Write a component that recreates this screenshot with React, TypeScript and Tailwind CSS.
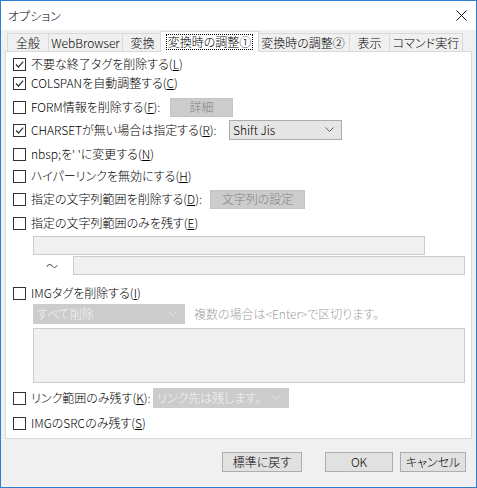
import React from 'react';

const font = "font-['Noto_Sans_CJK_JP','Noto_Sans',sans-serif] font-light [font-feature-settings:'palt']";

const CheckBox: React.FC<{ on?: boolean }> = ({ on }) => (
  <span className="w-[13px] h-[13px] border border-[#333333] bg-white flex items-center justify-center shrink-0">
    {on && (
      <svg width="11" height="11" viewBox="0 0 11 11">
        <path d="M2 5.5 L4.5 8 L9.2 2.6" fill="none" stroke="#333333" strokeWidth="1.2" />
      </svg>
    )}
  </span>
);

interface OptionProps {
  text: string;
  mnemonic: string;
  on?: boolean;
  colon?: boolean;
  width?: string;
}

const Option: React.FC<OptionProps> = ({ text, mnemonic, on, colon, width }) => (
  <div className={`flex items-center gap-[5px] shrink-0 ${width ?? ''}`}>
    <CheckBox on={on} />
    <span className="text-[12px] leading-[16px] text-black whitespace-nowrap">
      {text}(<u>{mnemonic}</u>){colon ? ':' : ''}
    </span>
  </div>
);

const Chevron: React.FC<{ color: string }> = ({ color }) => (
  <svg width="9" height="6" viewBox="0 0 9 6">
    <path d="M0.5 0.5 L4.5 4.5 L8.5 0.5" fill="none" stroke={color} strokeWidth="1" />
  </svg>
);

const tabs = [
  { label: '全般', w: 'w-[42px]' },
  { label: 'WebBrowser', w: 'w-[75px]' },
  { label: '変換', w: 'w-[41px]' },
  { label: '変換時の調整①', w: 'w-[99px]', active: true },
  { label: '変換時の調整②', w: 'w-[94px]' },
  { label: '表示', w: 'w-[41px]' },
  { label: 'コマンド実行', w: 'w-[74px]' },
];

export default function App() {
  return (
    <div className={`w-[477px] h-[488px] border border-[#2b7ed2] flex flex-col bg-[#f0f0f0] text-black ${font}`}>
      {/* title bar */}
      <div className="h-[29px] bg-white flex items-center justify-between pl-[7px] pr-[9px] shrink-0">
        <span className="text-[12px] leading-[16px]">オプション</span>
        <svg width="11" height="11" viewBox="0 0 11 11">
          <path d="M0.5 0.5 L10.5 10.5 M10.5 0.5 L0.5 10.5" stroke="#111111" strokeWidth="1" />
        </svg>
      </div>

      <div className="flex-1 flex flex-col px-[4px] pt-[1px]">
        {/* tabs */}
        <div className="h-[20px] flex items-end pl-[2px]">
          {tabs.map((t, i) =>
            t.active ? (
              <div
                key={t.label}
                className={`${t.w} h-[21px] -mb-px -ml-[3px] -mr-[2px] relative z-10 bg-white border border-b-0 border-[#d9d9d9] flex items-center justify-center`}
              >
                <span className="text-[12px] leading-[14px] border border-dotted border-black px-[1px]">{t.label}</span>
              </div>
            ) : (
              <div
                key={t.label}
                className={`${t.w} h-[18px] ${i > 0 ? '-ml-px' : ''} border border-b-0 border-[#d9d9d9] bg-[#f0f0f0] flex items-center justify-center text-[12px] leading-[14px]`}
              >
                {t.label}
              </div>
            )
          )}
        </div>

        {/* panel */}
        <div className="h-[388px] bg-white border border-[#d9d9d9] flex flex-col pl-[7px] shrink-0">
          <div className="mt-[3px] h-[18px] flex items-center">
            <Option text="不要な終了タグを削除する" mnemonic="L" on />
          </div>
          <div className="mt-[1px] h-[18px] flex items-center">
            <Option text="COLSPANを自動調整する" mnemonic="C" on />
          </div>
          <div className="mt-[5px] h-[20px] flex items-center">
            <Option text="FORM情報を削除する" mnemonic="F" colon width="w-[157px]" />
            <div className="w-[63px] h-[19px] bg-[#cccccc] border border-[#c4c4c4] flex items-center justify-center text-[12px] text-[#838383]">
              詳細
            </div>
          </div>
          <div className="mt-[3px] h-[20px] flex items-center">
            <Option text="CHARSETが無い場合は指定する" mnemonic="R" colon on width="w-[216px]" />
            <div className="w-[113px] h-[20px] bg-[#e5e5e5] border border-[#acacac] flex items-center justify-between pl-[3px] pr-[7px] text-[12px]">
              <span>Shift Jis</span>
              <Chevron color="#606060" />
            </div>
          </div>
          <div className="mt-[5px] h-[18px] flex items-center">
            <Option text="nbsp;を' 'に変更する" mnemonic="N" />
          </div>
          <div className="mt-[4px] h-[18px] flex items-center">
            <Option text="ハイパーリンクを無効にする" mnemonic="H" />
          </div>
          <div className="mt-[4px] h-[20px] flex items-center">
            <Option text="指定の文字列範囲を削除する" mnemonic="D" colon width="w-[197px]" />
            <div className="w-[95px] h-[19px] bg-[#cccccc] border border-[#c4c4c4] flex items-center justify-center text-[12px] text-[#838383]">
              文字列の設定
            </div>
          </div>
          <div className="mt-[5px] h-[18px] flex items-center">
            <Option text="指定の文字列範囲のみを残す" mnemonic="E" />
          </div>
          <div className="mt-[4px] ml-[20px] w-[392px] h-[19px] bg-[#f0f0f0] border border-[#cccccc]" />
          <div className="mt-[1px] h-[19px] flex items-center">
            <span className="ml-[33px] w-[27px] text-[12px] text-[#333333]">〜</span>
            <div className="w-[392px] h-[19px] bg-[#f0f0f0] border border-[#cccccc]" />
          </div>
          <div className="mt-[9px] h-[18px] flex items-center">
            <Option text="IMGタグを削除する" mnemonic="I" />
          </div>
          <div className="mt-[2px] h-[20px] flex items-center">
            <div className="ml-[20px] w-[152px] h-[20px] bg-[#cccccc] border border-[#cccccc] flex items-center justify-between pl-[3px] pr-[7px] text-[12px] text-[#f4f4f4]">
              <span>すべて削除</span>
              <Chevron color="#e6e6e6" />
            </div>
            <span className="ml-[9px] text-[12px] text-[#a0a0a0] whitespace-nowrap">複数の場合は&lt;Enter&gt;で区切ります。</span>
          </div>
          <div className="mt-[4px] ml-[20px] w-[432px] h-[55px] bg-[#f0f0f0] border border-[#cccccc]" />
          <div className="mt-[5px] h-[20px] flex items-center">
            <Option text="リンク範囲のみ残す" mnemonic="K" colon width="w-[140px]" />
            <div className="w-[136px] h-[20px] bg-[#cccccc] border border-[#cccccc] flex items-center justify-between pl-[3px] pr-[7px] text-[12px] text-[#f4f4f4]">
              <span>リンク先は残します。</span>
              <Chevron color="#e6e6e6" />
            </div>
          </div>
          <div className="mt-[6px] h-[18px] flex items-center">
            <Option text="IMGのSRCのみ残す" mnemonic="S" />
          </div>
        </div>

        {/* buttons */}
        <div className="mt-[13px] flex justify-end pr-[6px] text-[12px]">
          <button className="w-[80px] h-[20px] bg-[#e1e1e1] border border-[#adadad] flex items-center justify-center">標準に戻す</button>
          <button className="ml-[23px] w-[68px] h-[20px] bg-[#e1e1e1] border border-[#adadad] flex items-center justify-center">OK</button>
          <button className="ml-[7px] w-[66px] h-[20px] bg-[#e1e1e1] border border-[#adadad] flex items-center justify-center">キャンセル</button>
        </div>
      </div>
    </div>
  );
}
